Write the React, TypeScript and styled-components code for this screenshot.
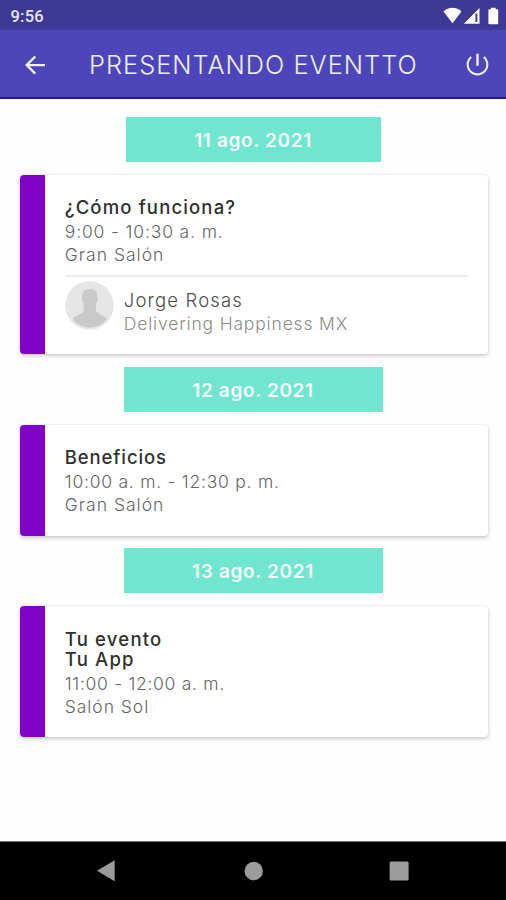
import React from "react";
import styled, { createGlobalStyle } from "styled-components";

const GlobalStyle = createGlobalStyle`
  * { box-sizing: border-box; }
  html, body { margin: 0; padding: 0; }
  body {
    background: #fefefe;
    font-family: Inter, "Open Sans", sans-serif;
    -webkit-font-smoothing: antialiased;
  }
`;

const Screen = styled.div`
  display: flex;
  flex-direction: column;
  width: 506px;
  height: 900px;
  overflow: hidden;
  background: #fefefe;
`;

const StatusBar = styled.div`
  display: flex;
  flex: none;
  align-items: center;
  justify-content: space-between;
  height: 30px;
  padding: 1px 7px 0 10.5px;
  background: #3e3994;
  color: #e6e5fa;
`;

const Clock = styled.span`
  padding-top: 2px;
  font: 500 16.5px/20px Roboto, sans-serif;
  letter-spacing: 0.2px;
`;

const StatusIcons = styled.svg`
  display: block;
  width: 56px;
  height: 20px;
`;

const Toolbar = styled.header`
  display: flex;
  flex: none;
  align-items: center;
  height: 69px;
  padding: 2px 14px 0 20px;
  border-bottom: 2px solid #1e14aa;
  background: #4d46bb;
  color: #f1f0ff;
`;

const IconButton = styled.button`
  display: flex;
  flex: none;
  padding: 0;
  border: 0;
  background: none;
  color: inherit;

  svg { display: block; }
`;

const Title = styled.h1`
  flex: 1;
  margin: 0 0 0 39px;
  font-size: 25.3px;
  font-weight: 350;
  line-height: 32px;
  letter-spacing: 1.05px;
  white-space: nowrap;
`;

const Agenda = styled.main`
  display: flex;
  flex: 1;
  flex-direction: column;
  align-items: center;
  padding-top: 17.5px;
`;

const DateBadge = styled.div<{ $width: number }>`
  display: flex;
  flex: none;
  align-items: center;
  justify-content: center;
  width: ${({ $width }) => $width}px;
  height: 45px;
  padding-top: 2px;
  background: #70e6d0;
  color: #f7fffd;
  font-size: 19px;
  font-weight: 600;
  letter-spacing: 0.65px;
  white-space: nowrap;
`;

const Card = styled.article<{ $height: number }>`
  display: flex;
  flex: none;
  width: 467.5px;
  height: ${({ $height }) => $height}px;
  margin: 13px 0 12.5px 2px;
  overflow: hidden;
  border-radius: 4px;
  background: #fff;
  box-shadow: 0 2px 4px rgba(0, 0, 0, 0.2), 0 0 2px rgba(0, 0, 0, 0.12);
`;

const Accent = styled.div`
  flex: none;
  width: 24.5px;
  background: #8004c8;
`;

const CardBody = styled.div`
  flex: 1;
  padding: 22.5px 20px 0 20px;
`;

const SessionTitle = styled.h2<{ $spacing: number }>`
  margin: 0 0 3px;
  color: #303030;
  font-size: 18.5px;
  font-weight: 500;
  line-height: 20px;
  letter-spacing: ${({ $spacing }) => $spacing}px;
  white-space: pre-line;
`;

const Detail = styled.p<{ $spacing: number }>`
  margin: 0;
  color: #666;
  font-size: 17.5px;
  font-weight: 300;
  line-height: 23px;
  letter-spacing: ${({ $spacing }) => $spacing}px;
  white-space: nowrap;
`;

const Speaker = styled.div`
  display: flex;
  gap: 10px;
  margin-top: 9px;
  padding-top: 4px;
  border-top: 2px solid #ececec;
`;

const Avatar = styled.svg`
  display: block;
  flex: none;
  width: 49px;
  height: 49px;
`;

const SpeakerText = styled.div`
  padding-top: 7px;
`;

const SpeakerName = styled.div`
  color: #4e4e4e;
  font-size: 18.5px;
  font-weight: 350;
  line-height: 24px;
  letter-spacing: 1.15px;
`;

const Company = styled.div`
  color: #8c8c8c;
  font-size: 17.5px;
  font-weight: 300;
  line-height: 24px;
  letter-spacing: 0.83px;
`;

const NavBar = styled.nav`
  display: flex;
  flex: none;
  align-items: flex-start;
  justify-content: space-between;
  height: 59px;
  padding: 18px 97px 0 96px;
  border-top: 1px solid #777;
  background: #000;

  svg { display: block; }
`;

interface Session {
  date: string;
  badgeWidth: number;
  height: number;
  title: string;
  titleSpacing: number;
  time: string;
  timeSpacing: number;
  place: string;
  placeSpacing: number;
  speaker?: { name: string; company: string };
}

const sessions: Session[] = [
  {
    date: "11 ago. 2021",
    badgeWidth: 255,
    height: 179.5,
    title: "¿Cómo funciona?",
    titleSpacing: 1.15,
    time: "9:00 - 10:30 a. m.",
    timeSpacing: 0.85,
    place: "Gran Salón",
    placeSpacing: 1,
    speaker: { name: "Jorge Rosas", company: "Delivering Happiness MX" },
  },
  {
    date: "12 ago. 2021",
    badgeWidth: 259,
    height: 111,
    title: "Beneficios",
    titleSpacing: 0.9,
    time: "10:00 a. m. - 12:30 p. m.",
    timeSpacing: 0.75,
    place: "Gran Salón",
    placeSpacing: 1,
  },
  {
    date: "13 ago. 2021",
    badgeWidth: 259,
    height: 131,
    title: "Tu evento\nTu App",
    titleSpacing: 1.2,
    time: "11:00 - 12:00 a. m.",
    timeSpacing: 0.7,
    place: "Salón Sol",
    placeSpacing: 0.95,
  },
];

export default function App() {
  return (
    <Screen>
      <GlobalStyle />
      <StatusBar>
        <Clock>9:56</Clock>
        <StatusIcons viewBox="0 0 56 20" fill="#fff">
          <path d="M0.5 5.400C5.500 0.500 13.500 0.500 18.500 5.400L9.500 17.200Z" />
          <path fillRule="evenodd" d="M36.500 2V17.800H20.800ZM32.400 7.500V16H34.300V7.500Z" />
          <path d="M46.400 3.200h1.600v-1.500h4.600v1.500h1.600q1 0 1 1v13q0 1-1 1h-7.800q-1 0-1-1v-13q0-1 1-1z" />
        </StatusIcons>
      </StatusBar>

      <Toolbar>
        <IconButton aria-label="Atrás">
          <svg width="30" height="30" viewBox="0 0 24 24" fill="currentColor">
            <path d="M20 11.100H7.600l5.300-5.300L11.500 4.500 4 12l7.500 7.500 1.400-1.300L7.600 12.900H20z" />
          </svg>
        </IconButton>
        <Title>PRESENTANDO EVENTTO</Title>
        <IconButton aria-label="Salir">
          <svg width="29" height="29" viewBox="0 0 24 24" fill="currentColor">
            <path d="M13 3h-2v10h2V3zm4.830 2.170l-1.200 1.200C18.200 7.700 19.300 9.700 19.300 12c0 4-3.200 7.300-7.300 7.300S4.700 16 4.700 12c0-2.300 1.100-4.300 2.680-5.620L6.170 5.170C4.230 6.820 3 9.260 3 12c0 4.970 4.030 9 9 9s9-4.030 9-9c0-2.740-1.230-5.180-3.170-6.830z" />
          </svg>
        </IconButton>
      </Toolbar>

      <Agenda>
        {sessions.map((s) => (
          <React.Fragment key={s.date}>
            <DateBadge $width={s.badgeWidth}>{s.date}</DateBadge>
            <Card $height={s.height}>
              <Accent />
              <CardBody>
                <SessionTitle $spacing={s.titleSpacing}>{s.title}</SessionTitle>
                <Detail $spacing={s.timeSpacing}>{s.time}</Detail>
                <Detail $spacing={s.placeSpacing}>{s.place}</Detail>
                {s.speaker && (
                  <Speaker>
                    <Avatar viewBox="0 0 49 49">
                      <circle cx="24.5" cy="24.5" r="24.3" fill="#e6e6e6" />
                      <path
                        d="M25 8c-5.500 0-8.200 3.200-7.700 8.500-.8 1-.2 4 1 4.800.1 2 .3 3.400.4 4.300v4.700c-1.500 3.200-7.500 3.600-11.200 7.700C12 43.800 18 46.500 24.500 46.500S37.500 43.800 42 38c-3.200-4.100-9.500-4.500-11-7.700v-4.700c.3-.9.500-2.300.4-4.300 1.200-.8 1.800-3.800 1-4.800C33 11.200 30.500 8 25 8Z"
                        fill="#c9c9c9"
                      />
                    </Avatar>
                    <SpeakerText>
                      <SpeakerName>{s.speaker.name}</SpeakerName>
                      <Company>{s.speaker.company}</Company>
                    </SpeakerText>
                  </Speaker>
                )}
              </CardBody>
            </Card>
          </React.Fragment>
        ))}
      </Agenda>

      <NavBar>
        <svg width="20" height="22" viewBox="0 0 20 22">
          <path d="M1 10.800 18.700 0.300V21.300Z" fill="#9c9c9c" />
        </svg>
        <svg width="20" height="22" viewBox="0 0 20 22">
          <circle cx="10.700" cy="11" r="9.200" fill="#9c9c9c" />
        </svg>
        <svg width="20" height="22" viewBox="0 0 20 22">
          <rect x="0.600" y="1.500" width="19" height="19" rx="1.500" fill="#9c9c9c" />
        </svg>
      </NavBar>
    </Screen>
  );
}
